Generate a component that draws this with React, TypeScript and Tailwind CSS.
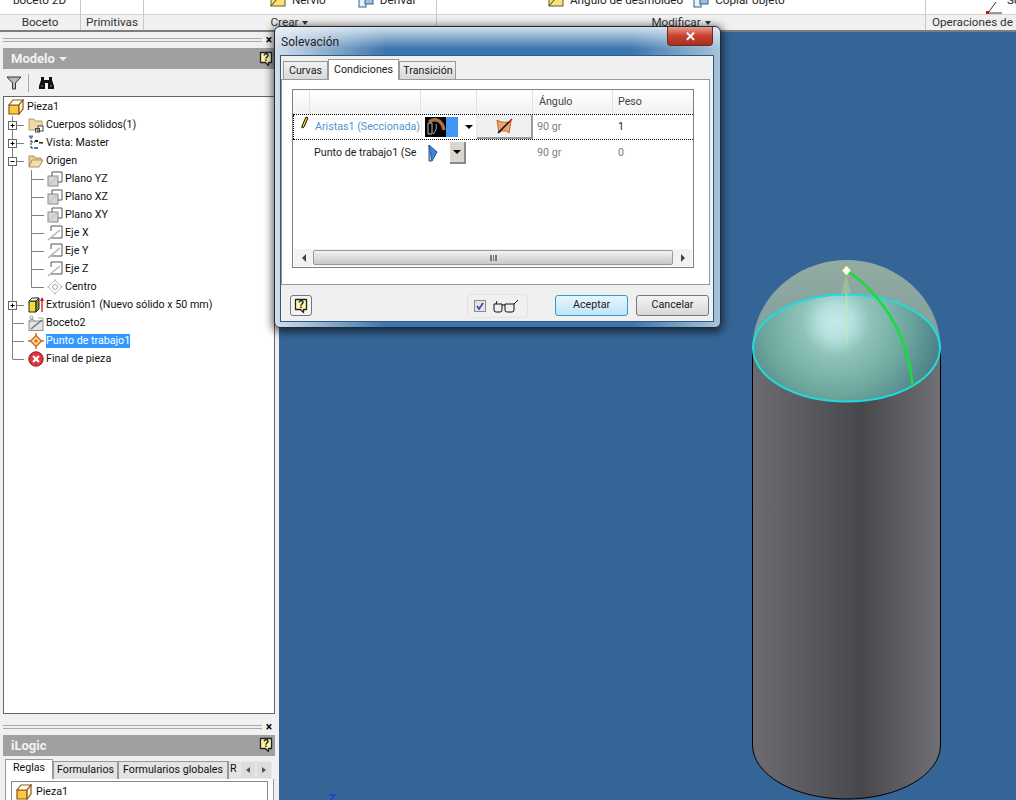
const font = "font-['Roboto','Liberation_Sans',sans-serif]";

function HelpIcon() {
  return (
    <svg width="14" height="16" viewBox="0 0 14 16">
      <path d="M1.5 1.5h11v10h-3v3l-3-3h-5z" fill="#fff7b0" stroke="#222" strokeWidth="1.3" strokeLinejoin="round" />
      <text x="7" y="10" fontSize="10" fontWeight="700" textAnchor="middle" fill="#111" fontFamily="Liberation Sans">?</text>
    </svg>
  );
}

function PartIcon() {
  return (
    <svg width="16" height="16" viewBox="0 0 16 16">
      <path d="M1 6h10v9H1z" fill="#fdc93c" stroke="#8a5a14" strokeWidth="1.2" />
      <path d="M1 6l4-5h10l-4 5z" fill="#fff" stroke="#8a5a14" strokeWidth="1.2" />
      <path d="M11 6l4-5v9l-4 5z" fill="#fff4cf" stroke="#8a5a14" strokeWidth="1.2" />
    </svg>
  );
}

function FolderLinkIcon() {
  return (
    <svg width="16" height="16" viewBox="0 0 16 16">
      <path d="M1 2h5l1 2h7v9H1z" fill="#f0d9a8" stroke="#b39a6c" />
      <rect x="10" y="9" width="5" height="5" fill="#fff" stroke="#444" />
      <rect x="7.5" y="11.5" width="4" height="3.5" fill="none" stroke="#444" />
    </svg>
  );
}

function ViewIcon() {
  return (
    <svg width="16" height="16" viewBox="0 0 16 16">
      <path d="M3 2v12M3 7h4M3 13h4" stroke="#222" fill="none" strokeDasharray="2 1" />
      <rect x="1" y="0.5" width="4" height="2" fill="#4a7ab0" />
      <rect x="7" y="5" width="3" height="2" fill="#222" />
      <rect x="11" y="7" width="4" height="1.5" fill="#222" />
      <rect x="6" y="12" width="4" height="2" fill="#4a7ab0" />
    </svg>
  );
}

function FolderOpenIcon() {
  return (
    <svg width="16" height="16" viewBox="0 0 16 16">
      <path d="M1 14V3h5l1 2h6v2" fill="#e8cf9c" stroke="#a9905f" />
      <path d="M1 14l3-7h11l-4 7z" fill="#f3dcae" stroke="#a9905f" />
    </svg>
  );
}

function PlaneIcon() {
  return (
    <svg width="16" height="16" viewBox="0 0 16 16">
      <rect x="1" y="5" width="10" height="10" fill="#d6d6d6" stroke="#8a8a8a" />
      <path d="M1 15l10-10" stroke="#bdbdbd" />
      <path d="M5 5V1h10v10h-4" fill="none" stroke="#555" />
    </svg>
  );
}

function AxisIcon() {
  return (
    <svg width="16" height="16" viewBox="0 0 16 16">
      <path d="M4 1h11v12H4" fill="#fff" stroke="#555" />
      <path d="M4 1v5" stroke="#555" />
      <path d="M1 15L13 5" stroke="#b5b5b5" strokeWidth="1.6" />
    </svg>
  );
}

function CenterIcon() {
  return (
    <svg width="16" height="16" viewBox="0 0 16 16">
      <path d="M8 1l7 7-7 7-7-7z" fill="none" stroke="#c4c4c4" />
      <circle cx="8" cy="8" r="2.5" fill="#fff" stroke="#a8a8a8" />
      <path d="M8 0v3M8 13v3M0 8h3M13 8h3" stroke="#c4c4c4" />
    </svg>
  );
}

function ExtrudeIcon() {
  return (
    <svg width="16" height="16" viewBox="0 0 16 16">
      <path d="M1 4h7v11H1z" fill="#f3e02e" stroke="#222" />
      <path d="M1 4l3-3h7L8 4z" fill="#fff" stroke="#222" />
      <path d="M8 4l3-3v11l-3 3z" fill="#8f8f3a" stroke="#222" />
      <path d="M14 15V3" stroke="#c4141c" strokeWidth="1.3" />
      <path d="M14 0l2 4h-4z" fill="#c4141c" />
    </svg>
  );
}

function SketchIcon() {
  return (
    <svg width="16" height="16" viewBox="0 0 16 16">
      <rect x="1" y="6" width="14" height="9.5" fill="#e4e4e4" stroke="#8f8f8f" />
      <circle cx="3.5" cy="2.5" r="1.6" fill="#fff" stroke="#8f8f8f" />
      <path d="M1 6l3-2 3 2" fill="none" stroke="#8f8f8f" />
      <path d="M3 14L14 5" stroke="#777" strokeWidth="1.6" />
      <path d="M10 3h5v3" fill="none" stroke="#aaa" />
    </svg>
  );
}

function WorkPointIcon() {
  return (
    <svg width="16" height="16" viewBox="0 0 16 16">
      <path d="M8 0v16M0 8h16" stroke="#d26a1c" strokeWidth="1.4" />
      <path d="M8 2.5L13.5 8 8 13.5 2.5 8z" fill="#f6d9a0" stroke="#d26a1c" strokeWidth="1.4" />
      <circle cx="8" cy="8" r="1.6" fill="#d26a1c" />
    </svg>
  );
}

function EndIcon() {
  return (
    <svg width="16" height="16" viewBox="0 0 16 16">
      <circle cx="8" cy="8" r="7.2" fill="#e0343c" stroke="#8a1a20" />
      <path d="M5 5l6 6M11 5l-6 6" stroke="#fff" strokeWidth="2.2" />
    </svg>
  );
}

type RowProps = {
  label: string;
  icon: React.ReactNode;
  depth?: number;
  expander?: "plus" | "minus";
  last?: boolean;
  subLast?: boolean;
  selected?: boolean;
};

// connectors are drawn per row, the trunk is at x=8 and the child trunk at x=27
function Gutter({ depth, expander, last, subLast }: RowProps) {
  const w = depth === 1 ? 43 : 24;
  return (
    <svg width={w} height="18" className="shrink-0">
      <path d={`M8.5 0V${last ? 9 : 18}`} stroke="#808080" fill="none" />
      {depth === 1 ? (
        <path d={`M27.5 0V${subLast ? 9.5 : 18}M27.5 9.5H40`} stroke="#808080" fill="none" />
      ) : (
        <path d="M8.5 9.5H20" stroke="#808080" fill="none" />
      )}
      {expander && (
        <g>
          <rect x="4.5" y="5.5" width="8" height="8" fill="#fff" stroke="#666" />
          <path d="M6.5 9.5h4" stroke="#000" />
          {expander === "plus" && <path d="M8.5 7.5v4" stroke="#000" />}
        </g>
      )}
    </svg>
  );
}

function TreeRow(props: RowProps) {
  return (
    <div className="flex h-[18px] items-center">
      <Gutter {...props} />
      {props.icon}
      <span className={`ml-[2px] whitespace-nowrap leading-[14px] ${props.selected ? "bg-[#3399ff] text-white" : ""}`}>
        {props.label}
      </span>
    </div>
  );
}

function Grip() {
  return (
    <div className="flex h-[16px] items-center pl-[3px] pr-[5px]">
      <div className="h-[4px] flex-1 border-y border-[#a8a8a8]" />
      <div className="ml-[4px] mr-[2px] text-[12px] font-bold leading-none text-black">×</div>
    </div>
  );
}

function PanelHeader({ title, arrow }: { title: string; arrow?: boolean }) {
  return (
    <div className="ml-[3px] mr-[4px] flex h-[21px] items-center justify-between bg-[#a0a0a0] pl-[8px] pr-[2px] text-[13px] font-bold text-[#f2f2f2]">
      <div className="flex items-center gap-[4px]">
        {title}
        {arrow && <div className="mt-[1px] border-x-[4px] border-t-[4px] border-x-transparent border-t-[#f2f2f2]" />}
      </div>
      <HelpIcon />
    </div>
  );
}

function Toolbar() {
  return (
    <div className="flex h-[27px] items-center pl-[6px]">
      <svg width="16" height="14" viewBox="0 0 16 14">
        <path d="M1 1h14L9.5 7v6h-3V7z" fill="#bbb" stroke="#333" />
      </svg>
      <div className="mx-[6px] h-[18px] w-px bg-[#a8a8a8]" />
      <svg width="17" height="14" viewBox="0 0 17 14" className="ml-[3px]">
        <path d="M3 1h3v3h5V1h3v3l2 6v3h-6V7H7v6H1v-3l2-6z" fill="#111" />
        <path d="M3 10h2M12 10h2" stroke="#888" />
      </svg>
    </div>
  );
}

function ModelPanel() {
  return (
    <div className={`flex h-full w-[279px] shrink-0 flex-col bg-[#f0f0f0] text-[10.7px] text-[#111] ${font}`}>
      <Grip />
      <PanelHeader title="Modelo" arrow />
      <Toolbar />
      <div className="ml-[3px] mr-[4px] h-[618px] border border-[#666] bg-white pt-[1px]">
        <div className="flex h-[18px] items-center pl-[4px]">
          <PartIcon />
          <span className="ml-[3px]">Pieza1</span>
        </div>
        <TreeRow label="Cuerpos sólidos(1)" icon={<FolderLinkIcon />} expander="plus" />
        <TreeRow label="Vista: Master" icon={<ViewIcon />} expander="plus" />
        <TreeRow label="Origen" icon={<FolderOpenIcon />} expander="minus" />
        <TreeRow label="Plano YZ" icon={<PlaneIcon />} depth={1} />
        <TreeRow label="Plano XZ" icon={<PlaneIcon />} depth={1} />
        <TreeRow label="Plano XY" icon={<PlaneIcon />} depth={1} />
        <TreeRow label="Eje X" icon={<AxisIcon />} depth={1} />
        <TreeRow label="Eje Y" icon={<AxisIcon />} depth={1} />
        <TreeRow label="Eje Z" icon={<AxisIcon />} depth={1} />
        <TreeRow label="Centro" icon={<CenterIcon />} depth={1} subLast />
        <TreeRow label="Extrusión1 (Nuevo sólido x 50 mm)" icon={<ExtrudeIcon />} expander="plus" />
        <TreeRow label="Boceto2" icon={<SketchIcon />} />
        <TreeRow label="Punto de trabajo1" icon={<WorkPointIcon />} selected />
        <TreeRow label="Final de pieza" icon={<EndIcon />} last />
      </div>
      <div className="mt-[5px]">
        <Grip />
      </div>
      <PanelHeader title="iLogic" />
      <div className="mt-[3px] flex h-[20px] items-end whitespace-nowrap pl-[5px]">
        <div className="flex h-[20px] w-[48px] items-center justify-center border border-b-0 border-[#999] bg-white pb-[2px]">Reglas</div>
        <div className="flex h-[18px] w-[65px] items-center justify-center border border-b-0 border-[#999] bg-[#e4e4e4]">Formularios</div>
        <div className="flex h-[18px] w-[110px] items-center justify-center border border-b-0 border-[#999] bg-[#e4e4e4]">Formularios globales</div>
        <div className="h-[18px] w-[12px] overflow-hidden border-l border-[#999] bg-[#e4e4e4] pl-[1px]">R</div>
        <div className="flex h-[18px] w-[16px] items-center justify-center border border-[#e8e8e8] bg-[#ddd]">
          <div className="border-y-[3px] border-r-[4px] border-y-transparent border-r-[#555]" />
        </div>
        <div className="flex h-[18px] w-[16px] items-center justify-center border border-[#e8e8e8] bg-[#ddd]">
          <div className="border-y-[3px] border-l-[4px] border-y-transparent border-l-[#555]" />
        </div>
      </div>
      <div className="mx-[5px] flex-1 border-x border-[#999] bg-white px-[5px] pt-[2px]">
        <div className="flex h-full items-start border border-b-0 border-[#888] pl-[4px] pt-[2px]">
          <PartIcon />
          <span className="ml-[4px]">Pieza1</span>
        </div>
      </div>
    </div>
  );
}

function RibbonCell({ width, label, children }: { width: string; label: React.ReactNode; children?: React.ReactNode }) {
  return (
    <div className={`flex shrink-0 flex-col border-r border-[#c8c8c8] ${width}`}>
      <div className="relative flex h-[14px] items-end overflow-hidden bg-white">{children}</div>
      <div className="flex h-[16px] items-center justify-center border-t border-[#d4d4d4] bg-[#f0f0f0] text-[#333]">{label}</div>
    </div>
  );
}

function Caret() {
  return <span className="ml-[4px] inline-block border-x-[3px] border-t-[4px] border-x-transparent border-t-[#333]" />;
}

function RibbonTool({ icon, label, className }: { icon: React.ReactNode; label: string; className: string }) {
  return (
    <div className={`flex items-center whitespace-nowrap text-[#222] ${className}`}>
      {icon}
      <span className="ml-[6px]">{label}</span>
    </div>
  );
}

function RibIcon() {
  return (
    <svg width="16" height="14" viewBox="0 0 16 14" className="shrink-0">
      <rect x="1" y="0" width="14" height="12" fill="#f8e27a" stroke="#6b5a20" />
      <path d="M1 12L7 5h8" fill="none" stroke="#333" />
    </svg>
  );
}

function DeriveIcon() {
  return (
    <svg width="16" height="14" viewBox="0 0 16 14" className="shrink-0">
      <rect x="1" y="3" width="7" height="10" fill="#e8f0f8" stroke="#35608e" />
      <rect x="7" y="0" width="8" height="10" fill="#9cc0e4" stroke="#35608e" />
    </svg>
  );
}

function Ribbon() {
  return (
    <div className={`flex h-[32px] shrink-0 border-b-2 border-[#7d7d7d] text-[11.7px] ${font}`}>
      <RibbonCell width="w-[81px]" label="Boceto">
        <div className="mb-[4px] ml-[13px] whitespace-nowrap text-[#222]">boceto 2D</div>
      </RibbonCell>
      <RibbonCell width="w-[63px]" label="Primitivas" />
      <RibbonCell
        width="w-[293px]"
        label={
          <span className="mr-[1px] flex items-center">
            Crear
            <Caret />
          </span>
        }
      >
        <RibbonTool icon={<RibIcon />} label="Nervio" className="mb-[4px] ml-[126px]" />
        <RibbonTool icon={<DeriveIcon />} label="Derivar" className="mb-[4px] ml-[32px]" />
      </RibbonCell>
      <RibbonCell
        width="w-[489px]"
        label={
          <span className="flex items-center">
            Modificar
            <Caret />
          </span>
        }
      >
        <RibbonTool icon={<RibIcon />} label="Ángulo de desmoldeo" className="mb-[4px] ml-[111px]" />
        <RibbonTool icon={<DeriveIcon />} label="Copiar objeto" className="mb-[4px] ml-[10px]" />
      </RibbonCell>
      <div className="flex min-w-0 flex-1 flex-col">
        <div className="flex h-[14px] items-end overflow-hidden bg-white pl-[59px]">
          <svg width="18" height="13" viewBox="0 0 18 13" className="shrink-0">
            <path d="M3 12L11 1M3 12h14" stroke="#333" fill="none" />
            <rect x="1" y="10" width="3" height="3" fill="#d01010" />
          </svg>
          <span className="mb-[4px] ml-[4px] text-[#222]">So</span>
        </div>
        <div className="flex h-[16px] items-center overflow-hidden whitespace-nowrap border-t border-[#d4d4d4] bg-[#f0f0f0] pl-[6px] text-[#333]">Operaciones de</div>
      </div>
    </div>
  );
}

function Viewport() {
  return (
    <div className="relative min-w-0 flex-1 overflow-hidden bg-[#356596]">
      <svg width="737" height="768" viewBox="279 32 737 768" className="block">
        <defs>
          <linearGradient id="body" x1="0" x2="1" y1="0" y2="0">
            <stop offset="0" stopColor="#6d6b70" />
            <stop offset="0.58" stopColor="#48484c" />
            <stop offset="1" stopColor="#707075" />
          </linearGradient>
          <radialGradient id="dome" gradientUnits="userSpaceOnUse" cx="836" cy="322" r="105">
            <stop offset="0" stopColor="#c6eaea" />
            <stop offset="0.16" stopColor="#b5e0de" />
            <stop offset="0.32" stopColor="#8fc4ba" />
            <stop offset="0.7" stopColor="#6ba59c" />
            <stop offset="1" stopColor="#4e8288" />
          </radialGradient>
          <linearGradient id="cap" x1="0" x2="0" y1="0" y2="1">
            <stop offset="0" stopColor="#93aca2" />
            <stop offset="1" stopColor="#7f9d9c" />
          </linearGradient>
        </defs>
        <path d="M752.5 348V745A94 54 0 0 0 940.5 745V348z" fill="url(#body)" stroke="#000" />
        <path d="M752.5 348C752.5 300 795 260 846.5 260S940.5 300 940.5 348z" fill="url(#cap)" />
        <ellipse cx="846.5" cy="348" rx="93.5" ry="53.5" fill="url(#dome)" stroke="#1fdcdc" strokeWidth="2" />
        <path d="M846.5 293V345" stroke="#c8ecb4" strokeWidth="1.5" opacity="0.6" />
        <path d="M841 294L846 274L851 294z" fill="#a9c79a" opacity="0.6" />
        <path d="M846.5 270C878 292 908 330 912.5 386" fill="none" stroke="#12e03a" strokeWidth="2.4" />
        <path d="M846.5 266L850.5 270.5L846.5 275L842.5 270.5z" fill="#fffde0" stroke="#f2f2a0" />
        <text x="328" y="803" fontSize="13" fontWeight="700" fill="#1c3fe0" fontFamily="Liberation Sans">Z</text>
      </svg>
    </div>
  );
}

const cols = "grid grid-cols-[17px_111px_56px_56px_80px_1fr]";

function ConditionsTable() {
  return (
    <div className="flex h-[179px] flex-col border border-[#808080] bg-white">
      <div className={`${cols} h-[24px] shrink-0 bg-[linear-gradient(#ffffff,#f1f1f1)] text-[#444]`}>
        <div className="border-r border-[#e2e2e2]" />
        <div className="border-r border-[#e2e2e2]" />
        <div className="border-r border-[#e2e2e2]" />
        <div className="border-r border-[#e2e2e2]" />
        <div className="flex items-center border-r border-[#e2e2e2] pl-[6px] pt-[1px]">Ángulo</div>
        <div className="flex items-center pl-[5px] pt-[1px]">Peso</div>
      </div>
      <div className={`${cols} h-[26px] shrink-0 border-y border-dotted border-black`}>
        <div className="flex items-start border-l border-dotted border-black pl-[6px] pt-[1px]">
          <svg width="9" height="14" viewBox="0 0 9 14">
            <path d="M6 1l2 1-4 9-2 1v-2z" fill="#f5d820" stroke="#111" />
          </svg>
        </div>
        <div className="flex items-center overflow-hidden whitespace-nowrap pl-[5px] pt-[1px] text-[#4a97d6]">Aristas1 (Seccionada)</div>
        <div className="flex items-center border-x border-[#e8e8e8] pl-[3px]">
          <div className="relative h-[20px] w-[33px] overflow-hidden bg-black">
            <svg width="33" height="20" viewBox="0 0 33 20" className="block">
              <rect x="21" width="12" height="20" fill="#3f96f5" />
              <path d="M4 5C9 1 17 2 19 13" fill="none" stroke="#a9713f" strokeWidth="3.5" />
              <path d="M3 6h4v11H3zM8 17c3-3 4-6 3-10" fill="none" stroke="#bbb" />
            </svg>
          </div>
          <div className="ml-[7px] border-x-[4px] border-t-[4px] border-x-transparent border-t-black" />
        </div>
        <div className="flex items-center justify-center border-b-2 border-r-2 border-b-[#9a9a9a] border-r-[#9a9a9a] bg-[#f0f0f0]">
          <svg width="17" height="17" viewBox="0 0 17 17">
            <path d="M1 2C6 5 11 5 15 3L13 15C10 12 6 12 3 15z" fill="#eea46c" stroke="#b5682e" />
            <path d="M2 15L13 4" stroke="#111" strokeWidth="1.6" />
            <path d="M13 4l3-3" stroke="#d4141c" strokeWidth="1.6" />
          </svg>
        </div>
        <div className="flex items-center pl-[4px] pt-[1px] text-[#808080]">90 gr</div>
        <div className="flex items-center pl-[5px] pt-[1px] text-[#222]">1</div>
      </div>
      <div className={`${cols} h-[25px] shrink-0`}>
        <div />
        <div className="flex items-center overflow-hidden whitespace-nowrap pl-[4px] pt-[1px] text-[#222]">Punto de trabajo1 (Se</div>
        <div className="col-span-2 flex items-center pl-[4px]">
          <svg width="16" height="20" viewBox="0 0 16 20">
            <path d="M4 2l8 7-5 9" fill="#3f86d8" stroke="#1f4f90" />
            <path d="M4 2v16h3z" fill="#a8cdf0" stroke="#1f4f90" />
          </svg>
          <div className="ml-[9px] flex h-[22px] w-[16px] items-center justify-center border-b-2 border-r-2 border-[#8a8a8a] bg-[#d9d6d0]">
            <div className="border-x-[4px] border-t-[4px] border-x-transparent border-t-black" />
          </div>
        </div>
        <div className="flex items-center pl-[4px] pt-[1px] text-[#808080]">90 gr</div>
        <div className="flex items-center pl-[5px] pt-[1px] text-[#808080]">0</div>
      </div>
      <div className="flex-1" />
      <div className="mx-px mb-px flex h-[17px] shrink-0 items-center bg-[#f2f2f2]">
        <div className="flex w-[19px] justify-center">
          <div className="border-y-[4px] border-r-[4px] border-y-transparent border-r-[#444]" />
        </div>
        <div className="relative flex h-[15px] flex-1 items-center justify-center rounded-[2px] border border-[#9a9a9a] bg-[linear-gradient(#f2f2f2,#c8c8c8)]">
          <div className="h-[6px] w-[7px] border-x-2 border-x-[#777] bg-[linear-gradient(90deg,transparent_40%,#777_40%,#777_60%,transparent_60%)]" />
        </div>
        <div className="flex w-[19px] justify-center">
          <div className="border-y-[4px] border-l-[4px] border-y-transparent border-l-[#444]" />
        </div>
      </div>
    </div>
  );
}

function Dialog() {
  return (
    <div className={`absolute left-[274px] top-[26px] flex h-[302px] w-[447px] flex-col rounded-[6px] border border-[#1f2a35] bg-[linear-gradient(180deg,rgba(235,242,247,0.85),rgba(235,242,247,0)_22px),linear-gradient(90deg,#d3dfe9,#3c75ae_25%,#3c75ae_80%,#a8c4da)] pb-[5px] pl-[5px] pr-[6px] text-[10.7px] shadow-[0_2px_8px_2px_rgba(0,0,0,0.6)] ${font}`}>
      <div className="flex h-[28px] shrink-0 justify-between">
        <div className="flex items-center pl-[1px] pt-[1px] text-[12px] text-[#222]">Solevación</div>
        <div className="mr-px flex h-[19px] w-[46px] items-center justify-center rounded-b-[4px] border border-t-0 border-[#6b2a22] bg-[linear-gradient(#e8a090,#c8402e_50%,#a83020)] text-[13px] font-bold leading-none text-white">
          ✕
        </div>
      </div>
      <div className="flex min-h-0 flex-1 flex-col border border-[#2d5a88] bg-[#f0f0f0] text-[#222]">
        <div className="flex h-[23px] shrink-0 items-end pl-[2px]">
          <div className="flex h-[18px] w-[45px] items-center justify-center border border-b-0 border-[#999] bg-[linear-gradient(#f2f2f2,#d9d9d9)] pt-[1px]">Curvas</div>
          <div className="relative z-10 -mb-px flex h-[21px] w-[71px] items-center justify-center border border-b-0 border-[#999] bg-white">Condiciones</div>
          <div className="flex h-[18px] w-[57px] items-center justify-center border border-b-0 border-[#999] bg-[linear-gradient(#f2f2f2,#d9d9d9)] pl-[1px] pt-[1px]">Transición</div>
        </div>
        <div className="ml-0 mr-[3px] h-[206px] shrink-0 border border-[#999] bg-white pl-[10px] pr-[15px] pt-[9px]">
          <ConditionsTable />
        </div>
        <div className="flex flex-1 items-center pl-[9px] pr-[4px] pt-[5px]">
          <div className="flex h-[21px] w-[22px] items-center justify-center rounded-[3px] border border-[#777] bg-[#f4f4f4]">
            <HelpIcon />
          </div>
          <div className="ml-[155px] flex h-[24px] w-[61px] items-center rounded-[3px] border border-[#e4e4e4] pl-[6px]">
            <div className="flex h-[12px] w-[12px] items-center justify-center border border-[#8a8a8a] bg-[#dde3f2]">
              <svg width="10" height="10" viewBox="0 0 10 10">
                <path d="M2 5l2 3 4-6" fill="none" stroke="#3a4f92" strokeWidth="1.6" />
              </svg>
            </div>
            <svg width="30" height="14" viewBox="0 0 30 14" className="ml-[5px]">
              <path d="M3 5h8v6a2 2 0 0 1-2 2H5a2 2 0 0 1-2-2zM14 5h9v6a2 2 0 0 1-2 2h-5a2 2 0 0 1-2-2zM11 6h3M5 5l1-3M23 5l4-4" fill="none" stroke="#111" />
            </svg>
          </div>
          <div className="ml-[27px] flex h-[21px] w-[73px] items-center justify-center rounded-[3px] border border-[#2f9bd4] bg-[linear-gradient(#e8f6fd,#bfe4f8)]">Aceptar</div>
          <div className="ml-[8px] flex h-[21px] w-[73px] items-center justify-center rounded-[3px] border border-[#777] bg-[linear-gradient(#f4f4f4,#d8d8d8)]">Cancelar</div>
        </div>
      </div>
    </div>
  );
}

export default function App() {
  return (
    <div className="relative flex h-[800px] w-[1016px] flex-col overflow-hidden bg-[#f0f0f0]">
      <Ribbon />
      <div className="flex min-h-0 flex-1">
        <ModelPanel />
        <Viewport />
      </div>
      <Dialog />
    </div>
  );
}
